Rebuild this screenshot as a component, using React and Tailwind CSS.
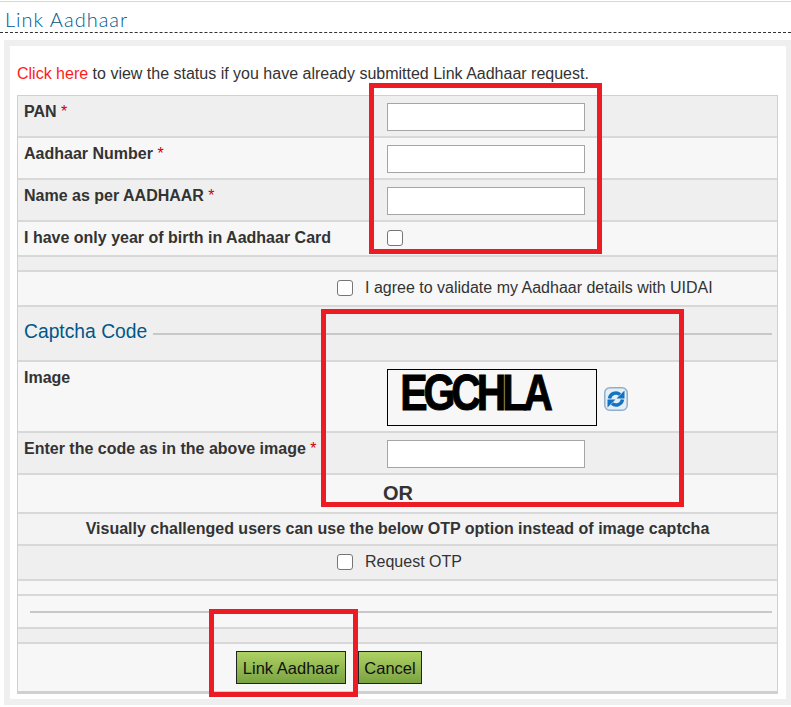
const labelClass = "font-bold text-[#333]";

const Star = () => <span className="font-normal text-[#c00]"> *</span>;

const TextBox = () => (
  <input type="text" className="block w-[198px] h-[28px] bg-white border border-[#a5a5a5]" />
);

const CheckBox = () => (
  <input type="checkbox" className="block appearance-none w-[16px] h-[16px] bg-white border border-[#767676] rounded-[3px]" />
);

const Refresh = () => (
  <svg width="24" height="24" viewBox="0 0 24 24" className="ml-[7px] mt-[18px]">
    <rect x="0.75" y="0.75" width="22.5" height="22.5" rx="5" fill="#e6eef5" stroke="#8fb0cc" strokeWidth="1.5" />
    <path d="M5.5 11.5 A6.5 6.5 0 0 1 16 7.5" fill="none" stroke="#1273c4" strokeWidth="3.5" />
    <path d="M12.5 11.5 L20.5 11.5 L20.5 3.5 Z" fill="#1273c4" />
    <path d="M18.5 12.5 A6.5 6.5 0 0 1 8 16.5" fill="none" stroke="#1273c4" strokeWidth="3.5" />
    <path d="M11.5 12.5 L3.5 12.5 L3.5 20.5 Z" fill="#1273c4" />
  </svg>
);

const RedBox = ({ className }) => (
  <div className={"absolute border-[5px] border-[#ed1c24] pointer-events-none " + className}></div>
);

const FormRow = ({ label, shade, height, children }) => (
  <div className={"flex border-b-2 border-[#d8d8d8] " + height + " " + shade}>
    <div className={"w-[369px] pl-[6px] pt-[7px] " + labelClass}>{label}</div>
    <div className="flex-1 pt-[7px]">{children}</div>
  </div>
);

export default function App() {
  const gray = "bg-[#efefef]";
  const light = "bg-[#f7f7f7]";

  return (
    <div className="relative w-[791px] h-[707px] overflow-hidden bg-white text-[16px] leading-[18px] text-[#333] font-['Liberation_Sans',Arial,sans-serif]">
      <div className="mt-[1px] border-t border-[#d8d8d8]">
        <div className="h-[31px] border-b border-dashed border-[#333] pl-[5px] pt-[5px]">
          <h1 className="font-['Lato',sans-serif] font-light text-[20px] leading-[24px] tracking-[1px] text-[#00578a]">Link Aadhaar</h1>
        </div>
      </div>

      <div className="mt-[7px] ml-[4px] h-[665px] border-[6px] border-[#efefef] bg-white border-r-[5px] pl-[7px] pr-[8px]">
        <p className="pt-[19px] h-[49px]">
          <a className="text-[#ff1a1a]">Click here</a> to view the status if you have already submitted Link Aadhaar request.
        </p>

        <div className="border border-b-[3px] border-[#d0d0d0]">
          <FormRow label={<>PAN <Star /></>} shade={gray} height="h-[42px]"><TextBox /></FormRow>
          <FormRow label={<>Aadhaar Number <Star /></>} shade={light} height="h-[42px]"><TextBox /></FormRow>
          <FormRow label={<>Name as per AADHAAR <Star /></>} shade={gray} height="h-[42px]"><TextBox /></FormRow>
          <FormRow label="I have only year of birth in Aadhaar Card" shade={light} height="h-[35px]">
            <div className="pt-[1px]"><CheckBox /></div>
          </FormRow>
          <div className={"h-[15px] border-b-2 border-[#d8d8d8] " + gray}></div>

          <div className={"h-[35px] flex items-center pl-[319px] pb-[2px] gap-[12px] border-b-2 border-[#d8d8d8] " + light}>
            <CheckBox />
            <span>I agree to validate my Aadhaar details with UIDAI</span>
          </div>

          <div className={"h-[55px] flex items-center pl-[6px] pb-[4px] gap-[6px] border-b-2 border-[#d8d8d8] " + gray}>
            <span className="text-[19.3px] text-[#00578a]">Captcha Code</span>
            <div className="flex-1 h-[2px] mr-[5px] mt-[4px] bg-[#c8c8c8]"></div>
          </div>

          <div className={"flex h-[71px] border-b-2 border-[#d8d8d8] " + light}>
            <div className={"w-[369px] pl-[6px] pt-[7px] " + labelClass}>Image</div>
            <div className="flex-1 pt-[7px] flex items-start">
              <div className="w-[210px] h-[57px] border border-black">
                <span className="block w-max pl-[15px] pt-[3px] origin-left scale-x-[0.82] text-[50px] leading-[41px] font-bold text-black tracking-[-5px] whitespace-nowrap [-webkit-text-stroke:1px_black]">EGCHLA</span>
              </div>
              <Refresh />
            </div>
          </div>

          <FormRow label={<>Enter the code as in the above image <Star /></>} shade={gray} height="h-[42px]"><TextBox /></FormRow>

          <div className={"h-[39px] pl-[365px] pt-[8px] font-bold text-[20px] leading-[20px] border-b-2 border-[#d8d8d8] " + light}>OR</div>
          <div className="h-[32px] pt-[6px] text-center font-bold border-b-2 border-[#d8d8d8] bg-[#f3f3f3]">
            Visually challenged users can use the below OTP option instead of image captcha
          </div>
          <div className={"h-[35px] flex items-center pl-[319px] pb-[2px] gap-[12px] border-b-2 border-[#d8d8d8] " + gray}>
            <CheckBox />
            <span>Request OTP</span>
          </div>
          <div className={"h-[15px] border-b-2 border-[#d8d8d8] " + light}></div>
          <div className={"h-[33px] pt-[15px] pl-[12px] pr-[5px] border-b-2 border-[#d8d8d8] " + light}>
            <div className="h-[2px] bg-[#c8c8c8]"></div>
          </div>
          <div className={"h-[15px] border-b-2 border-[#d8d8d8] " + gray}></div>
          <div className={"h-[47px] flex items-start pl-[218px] pt-[7px] gap-[12px] " + light}>
            <button className="h-[33px] w-[110px] border border-[#222] bg-gradient-to-b from-[#aed163] to-[#7aa341] text-[16.5px] text-[#111]">Link Aadhaar</button>
            <button className="h-[33px] w-[64px] border border-[#222] bg-gradient-to-b from-[#aed163] to-[#7aa341] text-[16.5px] text-[#111]">Cancel</button>
          </div>
        </div>
      </div>

      <RedBox className="left-[369px] top-[83px] w-[233px] h-[171px]" />
      <RedBox className="left-[321px] top-[309px] w-[363px] h-[198px]" />
      <RedBox className="left-[209px] top-[609px] w-[149px] h-[88px]" />
    </div>
  );
}
